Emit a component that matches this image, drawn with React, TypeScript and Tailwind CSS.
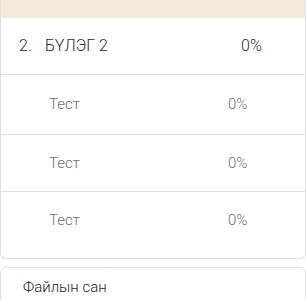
import React from "react";

const font = { fontFamily: "Roboto, 'Noto Sans', sans-serif" };

function SubRow({ h, last }: { h: string; last?: boolean }) {
  return (
    <div className={`flex items-center ${h} ${last ? "" : "border-b border-[#e0e0e0]"}`}>
      <div className="w-[48px]" />
      <div className="flex-1 text-[15px] font-light text-[#6e6e6e]">Тест</div>
      <div className="w-[77px] text-[15px] font-light text-[#6e6e6e]">0%</div>
    </div>
  );
}

export default function App() {
  return (
    <div className="w-[306px] h-[300px] overflow-hidden bg-white" style={font}>
      <div className="border-x border-b border-[#e0e0e0] rounded-b-[6px] overflow-hidden">
        <div className="h-[18px] bg-[#f3eadb]" />
        <div className="flex items-center h-[57px] border-b border-[#e0e0e0] text-[16px] font-light text-[#2a2a2a]">
          <div className="w-[44px] pl-[18px]">2.</div>
          <div className="flex-1">БҮЛЭГ 2</div>
          <div className="w-[64px]">0%</div>
        </div>
        <SubRow h="h-[60px]" />
        <SubRow h="h-[57px]" />
        <div className="pb-[9px]">
          <SubRow h="h-[57px]" last />
        </div>
      </div>
      <div className="mt-[8px] border border-[#e0e0e0] rounded-t-[6px] h-[60px] pl-[22px] pt-[8px] text-[15px] font-light text-[#1f1f1f]">
        Файлын сан
      </div>
    </div>
  );
}
